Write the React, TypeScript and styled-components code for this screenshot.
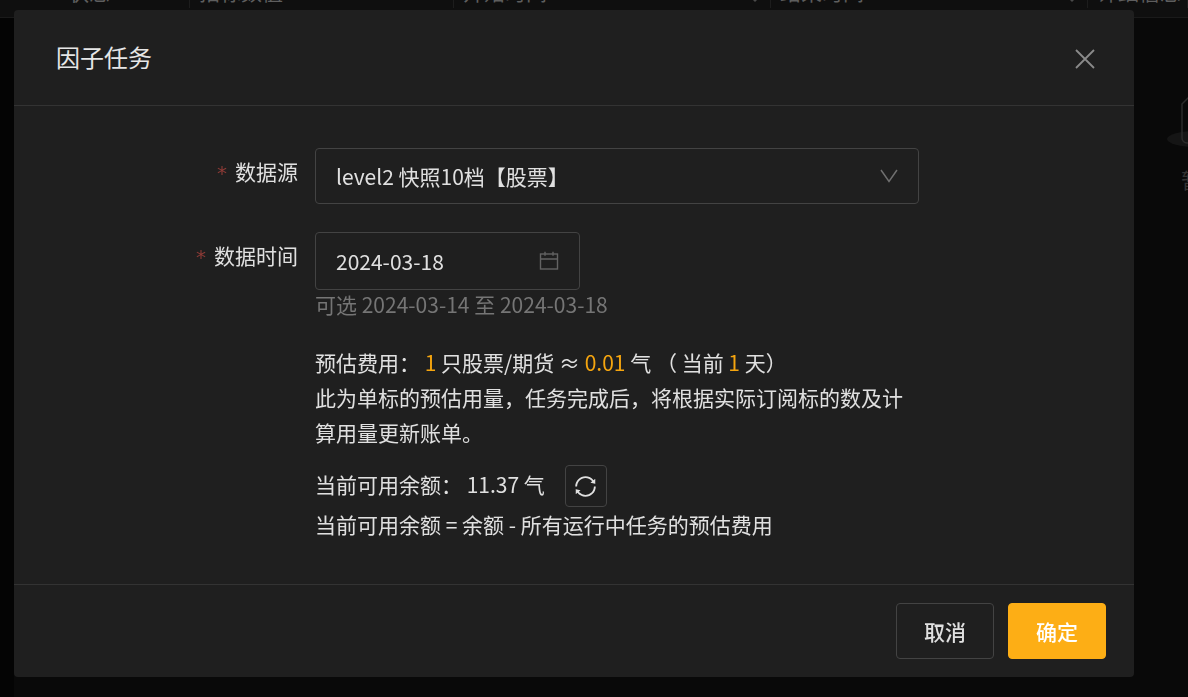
import React from "react";
import styled, { createGlobalStyle } from "styled-components";
import { AiOutlineSync } from "react-icons/ai";

const GlobalStyle = createGlobalStyle`
  html, body {
    margin: 0;
    height: 100%;
    background: #090909;
    overflow: hidden;
    font-family: "Noto Sans CJK SC", "Noto Sans", sans-serif;
  }
`;

const Page = styled.div`
  height: 697px;
  background: #090909;
  overflow: hidden;
`;

const TableHead = styled.div`
  display: grid;
  grid-template-columns: 190px 264px 317px 317px 100px;
  height: 17px;
  border-bottom: 1px solid #1a1a1a;
  background: #0f0f0f;
  overflow: hidden;
`;

const HeadCell = styled.div<{ $pad?: number }>`
  height: 8px;
  box-sizing: border-box;
  padding: 0 12px 0 ${(p) => p.$pad ?? 9}px;
  display: flex;
  justify-content: space-between;
  border-right: 1px solid #1d1d1d;
  overflow: hidden;
  white-space: nowrap;
  font-size: 21px;
  line-height: 21px;
  color: #5e5e5e;
`;

const HeadText = styled.span`
  margin-top: -19px;
`;

const SortCaret = styled.i`
  width: 0;
  height: 0;
  margin-top: -1px;
  border: 3px solid transparent;
  border-top-color: #4a4a4a;
  border-bottom: 0;
`;

const Body = styled.div`
  display: grid;
  grid-template-columns: 14px 1fr;
  height: 679px;
`;

const Rail = styled.div`
  background: #040404;
`;

const Empty = styled.div`
  width: 120px;
  margin: 78px 0 0 1153px;
  color: #333333;
  font-size: 21px;
  white-space: nowrap;
`;

const EmptyLabel = styled.div`
  margin: 14px 0 0 14px;
`;

const Modal = styled.section`
  position: fixed;
  left: 14px;
  top: 10px;
  width: 1120px;
  height: 667px;
  display: flex;
  flex-direction: column;
  background: #1f1f1f;
  border-radius: 4px;
`;

const ModalHeader = styled.header`
  height: 96px;
  flex: none;
  box-sizing: border-box;
  padding: 0 38px 0 42px;
  display: flex;
  align-items: center;
  justify-content: space-between;
  border-bottom: 1px solid #333333;
`;

const Title = styled.h2`
  margin: -3px 0 0;
  font-size: 24px;
  font-weight: 400;
  color: #e6e6e6;
`;

const CloseButton = styled.button`
  display: flex;
  margin-top: 3px;
  padding: 0;
  border: 0;
  background: none;
  color: #8a8a8a;
`;

const ModalBody = styled.div`
  flex: 1;
  box-sizing: border-box;
  padding-top: 42px;
  border-bottom: 1px solid #333333;
`;

const FormRow = styled.div`
  display: flex;
  margin-bottom: 28px;
`;

const Label = styled.label`
  width: 284px;
  flex: none;
  height: 50px;
  line-height: 46px;
  text-align: right;
  font-size: 21px;
  color: #e0e0e0;
`;

const Star = styled.span`
  margin-right: 8px;
  font-family: "DejaVu Sans", sans-serif;
  font-size: 20px;
  color: #8c3a36;
`;

const Control = styled.div`
  margin-left: 17px;
`;

const Field = styled.div<{ $width: number; $height: number }>`
  width: ${(p) => p.$width}px;
  height: ${(p) => p.$height}px;
  box-sizing: border-box;
  padding: 0 20px;
  display: flex;
  align-items: center;
  justify-content: space-between;
  border: 1px solid #434343;
  border-radius: 4px;
  font-size: 21px;
  color: #e0e0e0;
`;

const Hint = styled.div`
  margin: -1px 0 1px;
  font-size: 21px;
  line-height: 30px;
  color: #757575;
`;

const Notes = styled.div`
  margin: -3px 0 0 301px;
  width: 600px;
  font-size: 21px;
  line-height: 35px;
  color: #e0e0e0;
`;

const Accent = styled.span`
  color: #f5a50f;
`;

const BalanceRow = styled.div`
  display: flex;
  align-items: center;
  gap: 20px;
  height: 42px;
  margin-top: 15px;
`;

const BalanceText = styled.span`
  margin-top: -3px;
`;

const RefreshButton = styled.button`
  width: 42px;
  height: 42px;
  display: flex;
  align-items: center;
  justify-content: center;
  padding: 0;
  background: none;
  border: 1px solid #434343;
  border-radius: 4px;
  color: #e0e0e0;
`;

const ModalFooter = styled.footer`
  height: 92px;
  flex: none;
  box-sizing: border-box;
  padding: 18px 28px 0 0;
  display: flex;
  justify-content: flex-end;
  gap: 14px;
`;

const Button = styled.button<{ $primary?: boolean }>`
  width: 98px;
  height: 56px;
  box-sizing: border-box;
  border: 1px solid ${(p) => (p.$primary ? "#fdae15" : "#434343")};
  border-radius: 4px;
  background: ${(p) => (p.$primary ? "#fdae15" : "transparent")};
  color: ${(p) => (p.$primary ? "#ffffff" : "#e0e0e0")};
  font-family: inherit;
  font-size: 21px;
  font-weight: 500;
`;

const CloseIcon = () => (
  <svg width="22" height="22" viewBox="0 0 22 22" fill="none" stroke="currentColor" strokeWidth="1.8">
    <path d="M2 2l18 18M20 2L2 20" />
  </svg>
);

const DownIcon = () => (
  <svg width="18" height="14" viewBox="0 0 18 14" fill="none" stroke="#6f6f6f" strokeWidth="1.5">
    <path d="M1 1l8 11.5L17 1" />
  </svg>
);

const CalendarIcon = () => (
  <svg width="20" height="20" viewBox="0 0 20 20" fill="none" stroke="#636363" strokeWidth="1.4">
    <rect x="1.5" y="3" width="17" height="15" />
    <path d="M1.5 8h17M6 .8v4M14 .8v4" />
  </svg>
);

const EmptyIcon = () => (
  <svg width="60" height="54" viewBox="0 0 60 54" fill="none" display="block">
    <ellipse cx="30" cy="43" rx="30" ry="8" fill="#151515" />
    <path d="M15 8l8-8h30v47H20a5 5 0 0 1-5-5z" stroke="#2a2a2a" strokeWidth="1.5" />
  </svg>
);

export default function App() {
  return (
    <Page>
      <GlobalStyle />
      <TableHead>
        <HeadCell $pad={68}><HeadText>状态</HeadText></HeadCell>
        <HeadCell><HeadText>指标数值</HeadText></HeadCell>
        <HeadCell><HeadText>开始时间</HeadText><SortCaret /></HeadCell>
        <HeadCell><HeadText>结束时间</HeadText><SortCaret /></HeadCell>
        <HeadCell><HeadText>详细信息</HeadText></HeadCell>
      </TableHead>
      <Body>
        <Rail />
        <Empty>
          <EmptyIcon />
          <EmptyLabel>暂无数据</EmptyLabel>
        </Empty>
      </Body>
      <Modal>
        <ModalHeader>
          <Title>因子任务</Title>
          <CloseButton aria-label="关闭">
            <CloseIcon />
          </CloseButton>
        </ModalHeader>
        <ModalBody>
          <FormRow>
            <Label><Star>*</Star>数据源</Label>
            <Control>
              <Field $width={604} $height={56}>
                level2 快照10档【股票】
                <DownIcon />
              </Field>
            </Control>
          </FormRow>
          <FormRow>
            <Label><Star>*</Star>数据时间</Label>
            <Control>
              <Field $width={265} $height={58}>
                2024-03-18
                <CalendarIcon />
              </Field>
              <Hint>可选 2024-03-14 至 2024-03-18</Hint>
            </Control>
          </FormRow>
          <Notes>
            <div>预估费用： <Accent>1</Accent> 只股票/期货 ≈ <Accent>0.01</Accent> 气 （ 当前 <Accent>1</Accent> 天）</div>
            <div>此为单标的预估用量，任务完成后，将根据实际订阅标的数及计算用量更新账单。</div>
            <BalanceRow>
              <BalanceText>当前可用余额： 11.37 气</BalanceText>
              <RefreshButton aria-label="刷新">
                <AiOutlineSync size={25} />
              </RefreshButton>
            </BalanceRow>
            <div>当前可用余额 = 余额 - 所有运行中任务的预估费用</div>
          </Notes>
        </ModalBody>
        <ModalFooter>
          <Button>取消</Button>
          <Button $primary>确定</Button>
        </ModalFooter>
      </Modal>
    </Page>
  );
}
